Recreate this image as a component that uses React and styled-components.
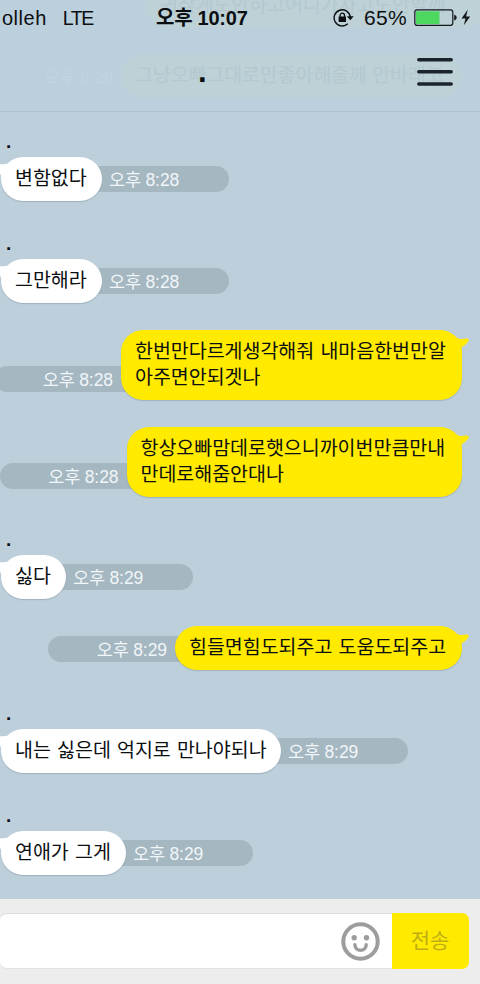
import React from "react";
import styled, { createGlobalStyle, css } from "styled-components";

const Global = createGlobalStyle`
  * { box-sizing: border-box; }
  body { margin: 0; background: #bccfdb; }
`;

const korean = `"Liberation Sans", "Noto Sans CJK KR", sans-serif`;

const Screen = styled.div`
  width: 480px;
  height: 984px;
  display: flex;
  flex-direction: column;
  overflow: hidden;
  background: #bccfdb;
  color: #0c0f12;
  font-family: ${korean};
`;

const Header = styled.header`
  position: relative;
  height: 112px;
  flex: none;
  overflow: hidden;
  border-bottom: 1px solid #adc0cb;
  background: #bbd0dc;
`;

const Ghost = styled.div`
  position: absolute;
  top: ${(p) => p.$top}px;
  left: ${(p) => p.$left}px;
  width: 341px;
  height: 44px;
  padding-left: 14px;
  border-radius: 22px;
  background: #bdd1d7;
  color: #b4c8ce;
  font-size: 19.5px;
  line-height: 43px;
  letter-spacing: -0.1px;
  white-space: nowrap;
`;

const GhostTime = styled.div`
  position: absolute;
  top: 65px;
  left: 44px;
  color: #c1d4df;
  font-size: 17px;
  line-height: 26px;
`;

const StatusBar = styled.div`
  position: relative;
  display: grid;
  grid-template-columns: 156px 177px 1fr;
  align-items: center;
  height: 36px;
`;

const Carrier = styled.div`
  display: flex;
  gap: 16px;
  padding-left: 2px;
  font-size: 20px;
  letter-spacing: 0.5px;
  line-height: 36px;
`;

const Network = styled.span`
  font-size: 19.5px;
  letter-spacing: -1.4px;
`;

const Clock = styled.div`
  font-size: 20px;
  font-weight: 700;
  line-height: 36px;
  letter-spacing: -0.25px;
  white-space: nowrap;
`;

const Indicators = styled.div`
  display: flex;
  align-items: center;
  height: 36px;
`;

const Percent = styled.span`
  width: 50px;
  margin-left: 9px;
  font-size: 21px;
  letter-spacing: 0.3px;
  line-height: 36px;
`;

const TitleBar = styled.div`
  position: relative;
  display: flex;
  justify-content: flex-end;
  height: 74px;
  padding: 21px 27px 0 0;
`;

const Title = styled.h1`
  flex: 1;
  margin: 0;
  padding-left: 198px;
  font-size: 31px;
  line-height: 30px;
`;

const Chat = styled.main`
  flex: 1;
  min-height: 0;
  padding-top: 21px;
`;

const Message = styled.article`
  margin-bottom: ${(p) => p.$gap}px;
`;

const Sender = styled.div`
  height: 24px;
  padding-left: 6px;
  font-size: 19px;
  font-weight: 700;
  line-height: 18px;
`;

const Line = styled.div`
  display: flex;
  align-items: flex-end;
  ${(p) =>
    p.$mine
      ? css`flex-direction: row-reverse; padding-right: 18px;`
      : css`padding-left: 1px;`}
`;

const Bubble = styled.div`
  position: relative;
  z-index: 1;
  flex: none;
  width: ${(p) => p.$width}px;
  padding: 8px 0 10px 14px;
  border-radius: 22px;
  background: ${(p) => (p.$mine ? "#ffea00" : "#ffffff")};
  box-shadow: 0 1px 1px rgba(70, 90, 100, 0.25);
  font-size: 19.5px;
  line-height: 26px;
  letter-spacing: -0.02px;
  word-spacing: 0.8px;
  white-space: pre;
`;

const Tail = styled.svg`
  position: absolute;
  top: ${(p) => (p.$mine ? 0 : 7)}px;
  ${(p) => (p.$mine ? "right: -7px;" : "left: -1px;")}
`;

const Time = styled.time`
  flex: none;
  width: 149px;
  height: 26px;
  background: #a5b7c1;
  color: #f1f6f9;
  font-size: 17.5px;
  line-height: 28px;
  letter-spacing: -0.05px;
  word-spacing: -0.5px;
  ${(p) =>
    p.$mine
      ? css`margin: 0 -22px 8px 0; padding-right: 30px; text-align: right; border-radius: 13px 0 0 13px;`
      : css`margin: 0 0 9px -22px; padding-left: 29px; border-radius: 0 13px 13px 0;`}
`;

const Composer = styled.footer`
  display: flex;
  flex: none;
  height: 85px;
  padding: 14px 11px 15px 0;
  background: #ededed;
`;

const Field = styled.div`
  display: flex;
  flex: 1;
  align-items: center;
  justify-content: flex-end;
  padding-right: 12px;
  border-top: 1px solid #dcdcdc;
  border-bottom: 1px solid #e2e2e2;
  border-radius: 7px 0 0 7px;
  background: #fff;
`;

const Send = styled.button`
  width: 77px;
  padding: 0 1px 5px 0;
  border: 0;
  border-radius: 0 7px 7px 0;
  background: #ffea00;
  color: #bfae13;
  font: 21px ${korean};
`;

function OrientationLock() {
  return (
    <svg width="22" height="20" viewBox="0 0 22 20" fill="none">
      <path d="M14.8 15.8A8.1 8.1 0 1 1 17.3 9" stroke="#0c0f12" strokeWidth="1.4" />
      <path d="M13.9 8.3h6.8l-3.4 4z" fill="#0c0f12" />
      <path d="M7.1 9V7.4a2.2 2.2 0 0 1 4.4 0V9" stroke="#0c0f12" strokeWidth="1.3" />
      <rect x="5.6" y="8.5" width="7.4" height="5.4" rx=".5" fill="#0c0f12" />
    </svg>
  );
}

function Battery() {
  return (
    <svg width="57" height="20" viewBox="0 0 57 20">
      <rect x=".8" y="1.8" width="38" height="15.6" rx="2.3" fill="none" stroke="#14191c" strokeWidth="1.2" />
      <rect x="2" y="3.2" width="23.5" height="12.8" rx=".8" fill="#4cd75f" />
      <path d="M40.2 6.8q2.5.4 2.5 2.8t-2.5 2.8z" fill="#14191c" />
      <path d="M53.8 1.6 47.5 10.6h4L49.8 17.2l6.4-8.6h-4.1z" fill="#14191c" />
    </svg>
  );
}

function MenuIcon() {
  return (
    <svg width="36" height="30" viewBox="0 0 36 30">
      <path d="M1.8 2.8h32.4M1.8 14.8h32.4M1.8 26.9h32.4" stroke="#1b242a" strokeWidth="3.5" strokeLinecap="round" />
    </svg>
  );
}

function Smiley() {
  return (
    <svg width="39" height="39" viewBox="0 0 39 39" fill="none">
      <circle cx="19.5" cy="19.5" r="17.2" stroke="#9d9d9d" strokeWidth="4" />
      <circle cx="13.2" cy="15.8" r="2.7" fill="#9d9d9d" />
      <circle cx="25.5" cy="15.8" r="2.7" fill="#9d9d9d" />
      <path d="M13.9 22.8c.6 7.4 10.7 7.4 11.3 0" stroke="#9d9d9d" strokeWidth="3.5" strokeLinecap="round" />
    </svg>
  );
}

function BubbleTail({ mine }) {
  return mine ? (
    <Tail $mine width="26" height="24" viewBox="0 0 26 24">
      <path d="M0 0.6Q8 3 13 7.2Q15.5 9 18 8.9L24.6 8.6Q26.3 9.6 25.2 11.6Q23 15 18.6 17.2L14 20L0 14Z" fill="#ffea00" />
    </Tail>
  ) : (
    <Tail width="14" height="14" viewBox="0 0 14 14">
      <path d="M0 .3Q5 .4 9-.8L12 13L1 13Q1.6 11.5 0 10Z" fill="#fff" />
    </Tail>
  );
}

const messages = [
  { text: "변함없다", time: "오후 8:28", width: 101, gap: 34 },
  { text: "그만해라", time: "오후 8:28", width: 101, gap: 27 },
  { mine: true, text: "한번만다르게생각해줘 내마음한번만알\n아주면안되겟나", time: "오후 8:28", width: 341, gap: 27 },
  { mine: true, text: "항상오빠맘데로햇으니까이번만큼만내\n만데로해줌안대나", time: "오후 8:28", width: 335.5, gap: 34 },
  { text: "싫다", time: "오후 8:29", width: 65, gap: 27 },
  { mine: true, text: "힘들면힘도되주고 도움도되주고", time: "오후 8:29", width: 287, gap: 34.5 },
  { text: "내는 싫은데 억지로 만나야되나", time: "오후 8:29", width: 280, gap: 34 },
  { text: "연애가 그게", time: "오후 8:29", width: 125, gap: 0 },
];

export default function App() {
  return (
    <Screen>
      <Global />
      <Header>
        <Ghost $top={-16} $left={146}>귀찮게도안하고어디가자고도안할께</Ghost>
        <GhostTime>오후 8:28</GhostTime>
        <Ghost $top={54} $left={121}>그냥오빠그대로만좋아해줄께 안바래고</Ghost>
        <StatusBar>
          <Carrier>
            <span>olleh</span>
            <Network>LTE</Network>
          </Carrier>
          <Clock>오후 10:07</Clock>
          <Indicators>
            <OrientationLock />
            <Percent>65%</Percent>
            <Battery />
          </Indicators>
        </StatusBar>
        <TitleBar>
          <Title>.</Title>
          <MenuIcon />
        </TitleBar>
      </Header>
      <Chat>
        {messages.map((m) => (
          <Message key={m.text} $gap={m.gap}>
            {!m.mine && <Sender>.</Sender>}
            <Line $mine={m.mine}>
              <Bubble $mine={m.mine} $width={m.width}>
                <BubbleTail mine={m.mine} />
                {m.text}
              </Bubble>
              <Time $mine={m.mine}>{m.time}</Time>
            </Line>
          </Message>
        ))}
      </Chat>
      <Composer>
        <Field>
          <Smiley />
        </Field>
        <Send>전송</Send>
      </Composer>
    </Screen>
  );
}
